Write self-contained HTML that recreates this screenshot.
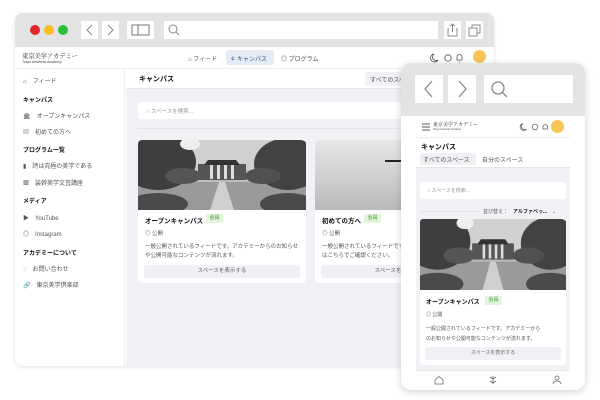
<!DOCTYPE html>
<html><head><meta charset="utf-8"><style>
*{box-sizing:border-box;margin:0;padding:0}
body{width:600px;height:400px;background:#fff;font-family:"Liberation Sans","Noto Sans CJK JP",sans-serif;position:relative;overflow:hidden;color:#222}
.a{position:absolute}
.t{font-size:6px;color:#555;white-space:nowrap}
.b{font-weight:bold;color:#111}
.box{background:#fff}
</style></head><body>
<svg width="0" height="0" style="position:absolute"><defs>
<symbol id="ph" viewBox="0 0 168 70" preserveAspectRatio="none">
<rect width="168" height="70" fill="#bdbdbd"/>
<rect width="168" height="30" fill="#d0d0d0"/>
<rect x="0" y="42" width="168" height="28" fill="#9a9a9a"/>
<polygon points="72,70 96,70 87,42 81,42" fill="#cfcfcf"/>
<rect x="60" y="24" width="48" height="16" fill="#555"/>
<polygon points="70,20 98,20 102,25 66,25" fill="#333"/>
<rect x="72" y="25" width="3" height="14" fill="#ddd"/><rect x="79" y="25" width="3" height="14" fill="#ddd"/><rect x="86" y="25" width="3" height="14" fill="#ddd"/><rect x="93" y="25" width="3" height="14" fill="#ddd"/>
<ellipse cx="20" cy="22" rx="38" ry="28" fill="#3e3e3e"/>
<ellipse cx="150" cy="24" rx="34" ry="26" fill="#424242"/>
<ellipse cx="45" cy="36" rx="18" ry="8" fill="#555"/>
<ellipse cx="125" cy="36" rx="18" ry="8" fill="#505050"/>
<ellipse cx="20" cy="64" rx="30" ry="11" fill="#4a4a4a"/>
<ellipse cx="150" cy="64" rx="28" ry="11" fill="#4a4a4a"/>
<ellipse cx="52" cy="4" rx="10" ry="6" fill="#eee"/>
</symbol></defs></svg>

<!-- desktop window -->
<div class="a" style="left:15px;top:13px;width:479px;height:353px;border-radius:8px;background:#fff;box-shadow:0 1px 4px rgba(0,0,0,.12);overflow:hidden">
 <div class="a" style="left:0;top:0;width:479px;height:34px;background:#e3e3e3"></div>
 <div class="a" style="left:15px;top:12px;width:10px;height:10px;border-radius:5px;background:#e0252b"></div>
 <div class="a" style="left:29px;top:12px;width:10px;height:10px;border-radius:5px;background:#f7bb23"></div>
 <div class="a" style="left:43px;top:12px;width:10px;height:10px;border-radius:5px;background:#27c13c"></div>
 <div class="a box" style="left:66px;top:8px;width:17px;height:18px"></div>
 <div class="a box" style="left:87px;top:8px;width:17px;height:18px"></div>
 <svg class="a" style="left:66px;top:8px" width="38" height="18"><path d="M11 4 L6 9 L11 14 M27 4 L32 9 L27 14" stroke="#888" fill="none"/></svg>
 <div class="a box" style="left:112px;top:8px;width:27px;height:18px"></div>
 <svg class="a" style="left:112px;top:8px" width="27" height="18"><rect x="5" y="4" width="17" height="10" stroke="#777" fill="none"/><line x1="11" y1="4" x2="11" y2="14" stroke="#777"/></svg>
 <div class="a box" style="left:149px;top:8px;width:274px;height:18px"></div>
 <svg class="a" style="left:152px;top:10px" width="14" height="14"><circle cx="6" cy="6" r="4" stroke="#888" fill="none"/><path d="M9 9 L12 12" stroke="#888"/></svg>
 <div class="a box" style="left:429px;top:8px;width:17px;height:18px"></div>
 <svg class="a" style="left:429px;top:8px" width="17" height="18"><path d="M8.5 3 V11 M6 5 L8.5 3 L11 5 M5 8 H4 V15 H13 V8 H12" stroke="#888" fill="none"/></svg>
 <div class="a box" style="left:451px;top:8px;width:17px;height:18px"></div>
 <svg class="a" style="left:451px;top:8px" width="17" height="18"><rect x="3" y="7" width="8" height="8" stroke="#888" fill="none"/><path d="M6 7 V4 H14 V12 H11" stroke="#888" fill="none"/></svg>
 <!-- nav -->
 <div class="a" style="left:0;top:34px;width:479px;height:22px;border-bottom:1px solid #eee"></div>
 <div class="a" style="left:7px;top:38px;font-size:6.5px;color:#333;font-family:'Noto Serif CJK SC',serif;letter-spacing:-.3px">東京美学アカデミー</div>
 <div class="a" style="left:7px;top:47px;font-size:3.5px;color:#444">Tokyo Aesthetic Academy</div>
 <div class="a t" style="left:173px;top:41px">⌂ フィード</div>
 <div class="a" style="left:211px;top:37px;width:48px;height:15px;border-radius:3px;background:#e4ebf5"></div>
 <div class="a t" style="left:215px;top:41px;color:#3b5b86">⚘ キャンパス</div>
 <div class="a t" style="left:266px;top:41px">◎ プログラム</div>
 <svg class="a" style="left:414px;top:39px" width="44" height="12"><path d="M5 2 A4 4 0 1 0 9 8 A3 3 0 0 1 5 2Z" stroke="#555" fill="none" stroke-width=".8"/><circle cx="19" cy="6" r="3.2" stroke="#555" fill="none" stroke-width=".8"/><path d="M28 8 V5 A2.5 2.5 0 0 1 33 5 V8 Z M30 10 H31" stroke="#555" fill="none" stroke-width=".8"/></svg>
 <div class="a" style="left:458px;top:37px;width:13px;height:13px;border-radius:7px;background:#f8c655"></div>
 <!-- sidebar -->
 <div class="a" style="left:0;top:56px;width:110px;height:297px;border-right:1px solid #eee"></div>
 <div class="a t" style="left:8px;top:63px">⌂　フィード</div>
 <div class="a t b" style="left:8px;top:82px">キャンパス</div>
 <div class="a t" style="left:8px;top:98px">🏛　オープンキャンパス</div>
 <div class="a t" style="left:8px;top:114px">▤　初めての方へ</div>
 <div class="a t b" style="left:8px;top:132px">プログラム一覧</div>
 <div class="a t" style="left:8px;top:148px">▮　詩は究極の美学である</div>
 <div class="a t" style="left:8px;top:165px">▩　装幹美学文芸講座</div>
 <div class="a t b" style="left:8px;top:183px">メディア</div>
 <div class="a t" style="left:8px;top:200px">▶　YouTube</div>
 <div class="a t" style="left:8px;top:216px">◎　Instagram</div>
 <div class="a t b" style="left:8px;top:235px">アカデミーについて</div>
 <div class="a t" style="left:8px;top:251px">◌　お問い合わせ</div>
 <div class="a t" style="left:8px;top:267px">🔗　東京美学倶楽部</div>
 <!-- content -->
 <div class="a" style="left:111px;top:56px;width:368px;height:297px;background:#f1f2f5"></div>
 <div class="a" style="left:111px;top:56px;width:368px;height:20px;background:#fff;border-bottom:1px solid #e8e8e8"></div>
 <div class="a b" style="left:124px;top:61px;font-size:7px">キャンパス</div>
 <div class="a" style="left:350px;top:59px;width:50px;height:14px;background:#f0f1f4;border-radius:3px"></div>
 <div class="a t" style="left:355px;top:62px">すべてのスペース</div>
 <div class="a box" style="left:123px;top:89px;width:300px;height:17px;border-radius:3px"></div>
 <div class="a t" style="left:131px;top:94px;color:#999;font-size:5.5px">○ スペースを検索...</div>
 <div class="a" style="left:123px;top:115px;width:300px;height:1px;background:#e4e5ea"></div>
 <div class="a box" style="left:123px;top:127px;width:168px;height:143px;border-radius:4px;overflow:hidden">
  <svg width="168" height="70"><use href="#ph"/></svg>
 </div>
 <div class="a t b" style="left:130px;top:202px;font-size:6.5px">オープンキャンパス</div>
 <div class="a" style="left:191px;top:201px;width:17px;height:9px;background:#e3f5dc;color:#3a9a2a;font-size:5px;text-align:center;line-height:9px">会員</div>
 <div class="a t" style="left:130px;top:216px;font-size:5.5px">◎ 公開</div>
 <div class="a t" style="left:130px;top:230px;font-size:5.5px;line-height:9px">一般公開されているフィードです。アカデミーからのお知らせ<br>や公開可能なコンテンツが流れます。</div>
 <div class="a" style="left:129px;top:252px;width:156px;height:13px;background:#f0f1f4;border-radius:3px;font-size:5.5px;color:#666;text-align:center;line-height:13px">スペースを表示する</div>
 <div class="a box" style="left:300px;top:127px;width:168px;height:143px;border-radius:4px;overflow:hidden">
  <div style="width:168px;height:70px;background:linear-gradient(#e6e6e6,#cfcfcf 55%,#b9b9b9)"></div>
  <div class="a" style="left:70px;top:20px;width:20px;height:2px;background:#222"></div>
 </div>
 <div class="a t b" style="left:307px;top:202px;font-size:6.5px">初めての方へ</div>
 <div class="a" style="left:349px;top:201px;width:17px;height:9px;background:#e3f5dc;color:#3a9a2a;font-size:5px;text-align:center;line-height:9px">会員</div>
 <div class="a t" style="left:307px;top:216px;font-size:5.5px">◎ 公開</div>
 <div class="a t" style="left:307px;top:230px;font-size:5.5px;line-height:9px">一般公開されているフィードです<br>はこちらでご確認ください。</div>
 <div class="a" style="left:306px;top:252px;width:156px;height:13px;background:#f0f1f4;border-radius:3px;font-size:5.5px;color:#666;text-align:center;line-height:13px">スペースを表示する</div>
</div>

<!-- mobile -->
<div class="a" style="left:401px;top:63px;width:184px;height:327px;border-radius:10px;background:#fff;box-shadow:0 2px 8px rgba(0,0,0,.18);overflow:hidden">
 <div class="a" style="left:0;top:0;width:184px;height:53px;background:#e3e3e3"></div>
 <div class="a box" style="left:14px;top:12px;width:28px;height:28px"></div>
 <div class="a box" style="left:47px;top:12px;width:28px;height:28px"></div>
 <svg class="a" style="left:14px;top:12px" width="61" height="28"><path d="M17 6 L10 14 L17 22 M44 6 L51 14 L44 22" stroke="#888" fill="none" stroke-width="1.3"/></svg>
 <div class="a box" style="left:83px;top:12px;width:89px;height:28px"></div>
 <svg class="a" style="left:88px;top:16px" width="22" height="22"><circle cx="9" cy="9" r="6" stroke="#888" fill="none" stroke-width="1.3"/><path d="M13 13 L18 18" stroke="#888" stroke-width="1.3"/></svg>
 <div class="a" style="left:15px;top:54px;width:154px;height:273px;background:#f1f2f5"></div>
 <div class="a box" style="left:15px;top:54px;width:154px;height:51px;border-bottom:1px solid #e6e6e6"></div>
 <div class="a" style="left:15px;top:74px;width:154px;height:1px;background:#eee"></div>
 <svg class="a" style="left:20px;top:59px" width="10" height="10"><path d="M1 2H9M1 5H9M1 8H9" stroke="#555"/></svg>
 <div class="a" style="left:32px;top:58px;font-size:5px;color:#333;font-family:'Noto Serif CJK SC',serif">東京美学アカデミー</div>
 <div class="a" style="left:32px;top:65px;font-size:2.5px;color:#555">Tokyo Aesthetic Academy</div>
 <svg class="a" style="left:118px;top:59px" width="32" height="10"><path d="M4 1.5 A3.5 3.5 0 1 0 7.5 7 A2.7 2.7 0 0 1 4 1.5Z" stroke="#555" fill="none" stroke-width=".7"/><circle cx="16" cy="5" r="2.8" stroke="#555" fill="none" stroke-width=".7"/><path d="M24 7 V4.5 A2.3 2.3 0 0 1 28.5 4.5 V7 Z" stroke="#555" fill="none" stroke-width=".7"/></svg>
 <div class="a" style="left:150px;top:57px;width:13px;height:13px;border-radius:7px;background:#f8c655"></div>
 <div class="a b" style="left:20px;top:79px;font-size:7px">キャンパス</div>
 <div class="a" style="left:19px;top:90px;width:56px;height:12px;background:#eef0f3;border-radius:3px"></div>
 <div class="a t" style="left:22px;top:92px;font-size:6px">すべてのスペース</div>
 <div class="a t" style="left:81px;top:92px;font-size:6px">自分のスペース</div>
 <div class="a box" style="left:19px;top:119px;width:146px;height:17px;border-radius:3px"></div>
 <div class="a t" style="left:26px;top:124px;color:#999;font-size:5px">○ スペースを検索...</div>
 <div class="a" style="left:19px;top:148px;width:60px;height:1px;background:#e4e5ea"></div>
 <div class="a t" style="left:82px;top:145px;font-size:5px">並び替え：　<b style="color:#222">アルファベッ...</b>　⌄</div>
 <div class="a box" style="left:19px;top:156px;width:146px;height:146px;border-radius:3px;overflow:hidden">
  <svg width="146" height="71"><use href="#ph"/></svg>
 </div>
 <div class="a t b" style="left:25px;top:234px;font-size:6px">オープンキャンパス</div>
 <div class="a" style="left:84px;top:233px;width:17px;height:9px;background:#e3f5dc;color:#3a9a2a;font-size:5px;text-align:center;line-height:9px">会員</div>
 <div class="a t" style="left:25px;top:248px;font-size:5px">◎ 公開</div>
 <div class="a t" style="left:25px;top:261px;font-size:5px;line-height:10px">一般公開されているフィードです。アカデミーから<br>のお知らせや公開可能なコンテンツが流れます。</div>
 <div class="a" style="left:24px;top:284px;width:136px;height:13px;background:#f0f1f4;border-radius:3px;font-size:5px;color:#666;text-align:center;line-height:13px">スペースを表示する</div>
 <div class="a box" style="left:15px;top:307px;width:154px;height:20px;border-top:1px solid #e6e6e6"></div>
 <svg class="a" style="left:15px;top:310px" width="154" height="14">
  <path d="M19 7 L23 3.5 L27 7 V11 H19 Z" stroke="#666" fill="none" stroke-width=".8"/>
  <path d="M77 3 V11 M74 4 L77 6 L80 4 M74 8 L77 10 L80 8" stroke="#666" fill="none" stroke-width=".8"/>
  <circle cx="141" cy="5" r="2" stroke="#666" fill="none" stroke-width=".8"/><path d="M137 11 A4 3 0 0 1 145 11" stroke="#666" fill="none" stroke-width=".8"/>
 </svg>
</div>
</body></html>
